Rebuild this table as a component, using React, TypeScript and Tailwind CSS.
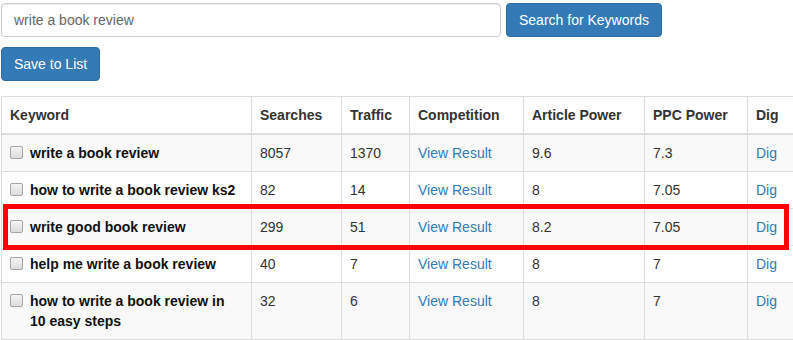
const rows = [
  { kw: "write a book review", searches: "8057", traffic: "1370", article: "9.6", ppc: "7.3" },
  { kw: "how to write a book review ks2", searches: "82", traffic: "14", article: "8", ppc: "7.05" },
  { kw: "write good book review", searches: "299", traffic: "51", article: "8.2", ppc: "7.05" },
  { kw: "help me write a book review", searches: "40", traffic: "7", article: "8", ppc: "7" },
  { kw: "how to write a book review in 10 easy steps", searches: "32", traffic: "6", article: "8", ppc: "7" },
];

function Checkbox() {
  return (
    <span className="mt-[3px] mr-[7px] inline-block h-[13px] w-[13px] shrink-0 rounded-[2px] border border-[#a6a6a6] bg-gradient-to-b from-[#f4f4f4] to-[#dcdcdc]" />
  );
}

export default function App() {
  const th = "border border-[#ddd] border-b-2 px-2 py-2 text-left align-bottom font-bold";
  const td = "border border-[#ddd] px-2 py-2 align-top";

  return (
    <main
      className="relative h-[340px] w-[793px] overflow-hidden bg-white pl-px pt-[3px] text-sm leading-[20px] text-[#333]"
      style={{ fontFamily: '"Liberation Sans", Arial, sans-serif' }}
    >
      <div className="flex gap-[5px]">
        <div className="flex h-[34px] w-[500px] items-center rounded border border-[#ccc] px-3 text-[#666] shadow-[inset_0_1px_1px_rgba(0,0,0,0.075)]">
          write a book review
        </div>
        <button className="h-[34px] rounded border border-[#2e6da4] bg-[#337ab7] px-3 text-white">
          Search for Keywords
        </button>
      </div>

      <button className="mt-[10px] h-[34px] rounded border border-[#2e6da4] bg-[#337ab7] px-3 text-white">
        Save to List
      </button>

      <table className="mt-[15px] w-[860px] table-fixed border-collapse">
        <colgroup>
          <col className="w-[250px]" />
          <col className="w-[90px]" />
          <col className="w-[68px]" />
          <col className="w-[114px]" />
          <col className="w-[121px]" />
          <col className="w-[103px]" />
          <col className="w-[114px]" />
        </colgroup>
        <thead>
          <tr>
            <th className={th}>Keyword</th>
            <th className={th}>Searches</th>
            <th className={th}>Traffic</th>
            <th className={th}>Competition</th>
            <th className={th}>Article Power</th>
            <th className={th}>PPC Power</th>
            <th className={th}>Dig</th>
          </tr>
        </thead>
        <tbody>
          {rows.map((r, i) => (
            <tr key={r.kw} className={i % 2 === 0 ? "bg-[#f9f9f9]" : "bg-white"}>
              <td className={td}>
                <div className="flex">
                  <Checkbox />
                  <span className="font-bold text-[#111]">{r.kw}</span>
                </div>
              </td>
              <td className={td}>{r.searches}</td>
              <td className={td}>{r.traffic}</td>
              <td className={`${td} text-[#337ab7]`}>View Result</td>
              <td className={td}>{r.article}</td>
              <td className={td}>{r.ppc}</td>
              <td className={`${td} text-[#337ab7]`}>Dig</td>
            </tr>
          ))}
        </tbody>
      </table>

      {/* annotation box round the third row */}
      <div className="pointer-events-none absolute left-[3px] top-[204px] h-[46px] w-[786px] border-[5px] border-[#f00]" />
    </main>
  );
}
